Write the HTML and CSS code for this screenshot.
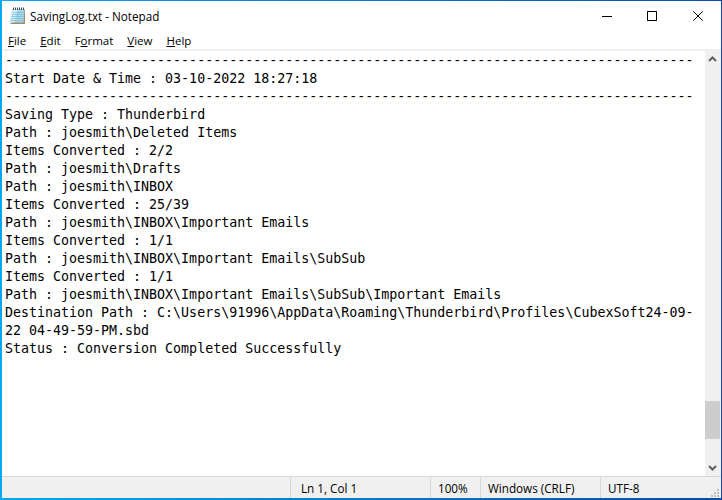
FILE: index.html
```html
<!DOCTYPE html>
<html lang="en">
<head>
<meta charset="utf-8">
<title>SavingLog.txt - Notepad</title>
<link rel="stylesheet" href="styles.css">
</head>
<body>
<div class="window">
  <header class="titlebar">
    <svg class="app-icon" width="17" height="18" viewBox="0 0 17 18">
      <path d="M3.500 2.500h12.500v14.500H1.500z" fill="#a08e66"/>
      <path d="M3.500 2h12l-1 13.500H.5z" fill="#a8d8ec"/>
      <path d="M3.500 2h5L5 15.500H.5z" fill="#d2eef8"/>
      <path d="M3.500 5.500h11.500M3 7.500h11.800M2.500 9.500h12M2 11.500h12.500M1.500 13.500h12.800" stroke="#7db9d6" stroke-width="1" opacity=".75"/>
      <path d="M4.500 0.500v2.500M6.500 0.500v2.500M8.500 0.500v2.500M10.500 0.500v2.500M12.500 0.500v2.500M14.500 0.500v2.500" stroke="#3a4a52" stroke-width="1"/>
    </svg>
    <span class="title">SavingLog.txt - Notepad</span>
    <div class="controls">
      <button class="ctl ctl-min" aria-label="Minimize"><svg width="10" height="10" viewBox="0 0 10 10"><path d="M0 5.500h10" stroke="#000"/></svg></button>
      <button class="ctl" aria-label="Maximize"><svg width="10" height="10" viewBox="0 0 10 10"><rect x=".5" y=".5" width="9" height="9" fill="none" stroke="#000"/></svg></button>
      <button class="ctl" aria-label="Close"><svg width="10" height="10" viewBox="0 0 10 10"><path d="M.3.300l9.400 9.400M9.700.300L.3 9.700" stroke="#000" stroke-width="1"/></svg></button>
    </div>
  </header>
  <nav class="menubar">
    <span class="menu menu-file"><u>F</u>ile</span>
    <span class="menu menu-edit"><u>E</u>dit</span>
    <span class="menu menu-format">F<u>o</u>rmat</span>
    <span class="menu menu-view"><u>V</u>iew</span>
    <span class="menu menu-help"><u>H</u>elp</span>
  </nav>
  <main class="editor">
    <pre class="text">--------------------------------------------------------------------------------------
Start Date &amp; Time : 03-10-2022 18:27:18
--------------------------------------------------------------------------------------
Saving Type : Thunderbird
Path : joesmith\Deleted Items
Items Converted : 2/2
Path : joesmith\Drafts
Path : joesmith\INBOX
Items Converted : 25/39
Path : joesmith\INBOX\Important Emails
Items Converted : 1/1
Path : joesmith\INBOX\Important Emails\SubSub
Items Converted : 1/1
Path : joesmith\INBOX\Important Emails\SubSub\Important Emails
Destination Path : C:\Users\91996\AppData\Roaming\Thunderbird\Profiles\CubexSoft24-09-
22 04-49-59-PM.sbd
Status : Conversion Completed Successfully</pre>
    <div class="scrollbar">
      <svg class="arrow" width="16" height="17" viewBox="0 0 16 17"><path d="M4 10l3.500-3.500L11 10" fill="none" stroke="#606060" stroke-width="2"/></svg>
      <div class="track"><div class="thumb"></div></div>
      <svg class="arrow" width="16" height="17" viewBox="0 0 16 17"><path d="M4 7l3.500 3.500L11 7" fill="none" stroke="#606060" stroke-width="2"/></svg>
    </div>
  </main>
  <footer class="statusbar">
    <div class="cell cell-spacer"></div>
    <div class="cell cell-pos">Ln 1, Col 1</div>
    <div class="cell cell-zoom">100%</div>
    <div class="cell cell-eol">Windows (CRLF)</div>
    <div class="cell cell-enc">UTF-8</div>
    <svg class="grip" width="12" height="12" viewBox="0 0 12 12"><path d="M8 3h2v2H8zM5 6h2v2H5zM8 6h2v2H8zM2 9h2v2H2zM5 9h2v2H5zM8 9h2v2H8z" fill="#c2c2c2"/></svg>
  </footer>
</div>
</body>
</html>
```
FILE: styles.css
```css
html, body {
  margin: 0;
  padding: 0;
  height: 100%;
  overflow: hidden;
}
.window {
  box-sizing: border-box;
  width: 722px;
  height: 500px;
  border-style: solid;
  border-width: 1px 1px 2px 2px;
  border-image: linear-gradient(90deg, #0aa6f0, #0a4ca8) 1;
  background: #fff;
  display: flex;
  flex-direction: column;
  font-family: "Open Sans", "Noto Sans", "Liberation Sans", sans-serif;
  color: #000;
}
.titlebar {
  height: 29px;
  display: flex;
  align-items: center;
  padding-left: 7px;
  flex: none;
}
.app-icon { flex: none; margin-top: 1px; }
.title {
  margin-left: 4px;
  font-size: 11.7px;
  flex: 1;
}
.controls { display: flex; align-self: stretch; }
.ctl {
  width: 46px;
  border: 0;
  padding: 0;
  background: none;
  display: flex;
  align-items: center;
  justify-content: center;
}
.ctl-min { padding-left: 2px; }
.menubar {
  height: 17px;
  padding-top: 2px;
  display: flex;
  align-items: center;
  flex: none;
}
.menu {
  font-size: 11.5px;
  padding-left: 14px;
}
.menu-file { padding-left: 6px; }
.editor {
  flex: 1;
  min-height: 0;
  display: flex;
  border-top: 2px solid #f0f0f0;
}
.text {
  flex: 1;
  margin: 0;
  padding: 1px 0 0 3px;
  font-family: "DejaVu Sans Mono", "Liberation Mono", monospace;
  font-size: 13.31px;
  line-height: 18px;
  color: #000;
  overflow: hidden;
}
.scrollbar {
  width: 16px;
  flex: none;
  background: #f0f0f0;
  display: flex;
  flex-direction: column;
}
.arrow { flex: none; }
.track {
  flex: 1;
  padding-top: 333px;
}
.thumb {
  width: 15px;
  height: 38px;
  background: #cdcdcd;
}
.statusbar {
  height: 21px;
  flex: none;
  display: flex;
  align-items: center;
  background: #f0f0f0;
  border-top: 1px solid #d7d7d7;
  font-size: 11.7px;
  position: relative;
}
.cell {
  box-sizing: border-box;
  height: 100%;
  display: flex;
  align-items: center;
  border-right: 1px solid #d7d7d7;
  white-space: nowrap;
}
.cell-spacer { width: 289px; }
.cell-pos { width: 140px; padding-left: 10px; }
.cell-zoom { width: 50px; padding-left: 7px; }
.cell-eol { width: 120px; padding-left: 7px; }
.cell-enc { border-right: 0; padding-left: 7px; flex: 1; }
.grip { position: absolute; right: 0; bottom: 0; }
```
